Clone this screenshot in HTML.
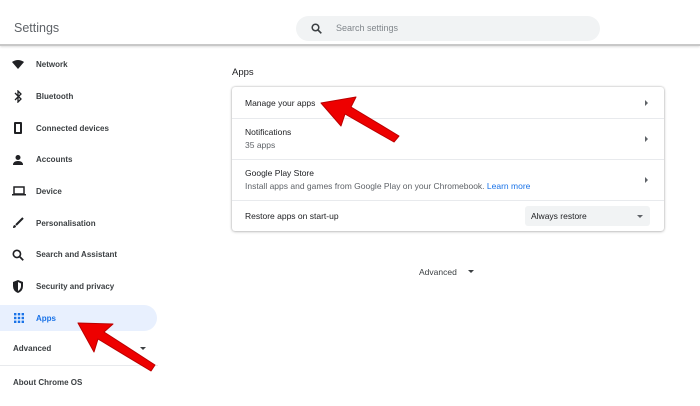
<!DOCTYPE html>
<html><head><style>
*{margin:0;padding:0;box-sizing:border-box}
body{width:700px;height:406px;overflow:hidden;background:#fff;font-family:"Liberation Sans",sans-serif;position:relative;color:#202124}
.hdr{position:absolute;left:0;top:0;width:700px;height:46px;border-bottom:2px solid #c8c8c8;box-shadow:0 1px 2px #ddd}
.title{position:absolute;left:14px;top:21px;font-size:12.5px;color:#5f6368}
.search{position:absolute;left:296px;top:16px;width:304px;height:25px;background:#f1f3f4;border-radius:13px}
.search span{position:absolute;left:40px;top:7px;font-size:9px;color:#80868b}
.nav{position:absolute;left:36px;font-size:8px;font-weight:bold;color:#3c4043}
.ic{position:absolute;left:12px}
.hl{position:absolute;left:0;top:305px;width:157px;height:26px;background:#e8f0fe;border-radius:0 13px 13px 0}
.card{position:absolute;left:232px;top:87px;width:432px;height:144px;border-radius:3px;box-shadow:0 0 2px rgba(0,0,0,.3),0 1px 3px rgba(0,0,0,.15)}
.row{position:absolute;left:0;width:432px;border-top:1px solid #e8eaed}
.t{position:absolute;left:13px;font-size:8.5px;color:#202124}
.s{position:absolute;left:13px;font-size:8.5px;color:#5f6368}
.ar{position:absolute;right:16px;width:0;height:0;border-left:3px solid #5f6368;border-top:3px solid transparent;border-bottom:3px solid transparent}
</style></head><body>
<div class="hdr"><div class="title">Settings</div>
<div class="search"><svg style="position:absolute;left:15px;top:7px" width="11" height="11" viewBox="0 0 11 11"><circle cx="4.5" cy="4.5" r="3.3" fill="none" stroke="#3c4043" stroke-width="1.5"/><path d="M7 7l3.3 3.3" stroke="#3c4043" stroke-width="1.6"/></svg><span>Search settings</span></div></div>

<svg class="ic" style="top:60px" width="12" height="9" viewBox="0 0 12 9"><path d="M0 2Q6-2 12 2L6 9z" fill="#202124"/></svg>
<div class="nav" style="top:60px">Network</div>
<svg class="ic" style="top:90px" width="12" height="13" viewBox="0 0 12 13"><path d="M3 3l6 6-3 3V1l3 3-6 6" fill="none" stroke="#202124" stroke-width="1.3"/></svg>
<div class="nav" style="top:92px">Bluetooth</div>
<div class="ic" style="top:122px;left:14px;width:8px;height:12px;border:2px solid #202124;border-radius:1px"></div>
<div class="nav" style="top:124px">Connected devices</div>
<svg class="ic" style="top:155px" width="12" height="10" viewBox="0 0 12 10"><circle cx="6" cy="2.5" r="2.5" fill="#202124"/><path d="M1 10Q1 6 6 6T11 10z" fill="#202124"/></svg>
<div class="nav" style="top:155px">Accounts</div>
<svg class="ic" style="top:186px" width="14" height="10" viewBox="0 0 14 10"><rect x="2" y="1" width="10" height="7" fill="none" stroke="#202124" stroke-width="1.5"/><rect x="0" y="8" width="14" height="1.5" fill="#202124"/></svg>
<div class="nav" style="top:187px">Device</div>
<svg class="ic" style="top:217px" width="12" height="12" viewBox="0 0 12 12"><path d="M11 1L4 8" stroke="#202124" stroke-width="2"/><path d="M1 11Q1 8 3 8L4 9Q4 11 1 11z" fill="#202124"/></svg>
<div class="nav" style="top:219px">Personalisation</div>
<svg class="ic" style="top:249px" width="12" height="12" viewBox="0 0 11 11"><circle cx="4.5" cy="4.5" r="3.3" fill="none" stroke="#202124" stroke-width="1.5"/><path d="M7 7l3.3 3.3" stroke="#202124" stroke-width="1.6"/></svg>
<div class="nav" style="top:250px">Search and Assistant</div>
<svg class="ic" style="top:280px" width="12" height="13" viewBox="0 0 12 13"><path d="M6 0L11 2V6Q11 11 6 13Q1 11 1 6V2z" fill="#202124"/><path d="M6 2V11Q9 9 9 6V3.5z" fill="#fff"/></svg>
<div class="nav" style="top:282px">Security and privacy</div>
<div class="hl"></div>
<svg class="ic" style="top:313px;left:14px" width="10" height="10" viewBox="0 0 10 10" fill="#1a73e8"><rect x="0" y="0" width="2.4" height="2.4"/><rect x="3.8" y="0" width="2.4" height="2.4"/><rect x="7.6" y="0" width="2.4" height="2.4"/><rect x="0" y="3.8" width="2.4" height="2.4"/><rect x="3.8" y="3.8" width="2.4" height="2.4"/><rect x="7.6" y="3.8" width="2.4" height="2.4"/><rect x="0" y="7.6" width="2.4" height="2.4"/><rect x="3.8" y="7.6" width="2.4" height="2.4"/><rect x="7.6" y="7.6" width="2.4" height="2.4"/></svg>
<div class="nav" style="top:314px;color:#1a73e8">Apps</div>
<div class="nav" style="top:344px;left:13px">Advanced</div>
<div style="position:absolute;left:140px;top:347px;border-left:3px solid transparent;border-right:3px solid transparent;border-top:3px solid #3c4043"></div>
<div style="position:absolute;left:0;top:365px;width:158px;border-top:1px solid #e8eaed"></div>
<div class="nav" style="top:378px;left:13px">About Chrome OS</div>

<div style="position:absolute;left:232px;top:67px;font-size:9.5px;color:#202124">Apps</div>
<div class="card">
<div class="t" style="top:11px">Manage your apps</div><div class="ar" style="top:13px"></div>
<div class="row" style="top:31px;height:41px"><div class="t" style="top:8px">Notifications</div><div class="s" style="top:21px">35 apps</div><div class="ar" style="top:17px"></div></div>
<div class="row" style="top:72px;height:41px"><div class="t" style="top:8px">Google Play Store</div><div class="s" style="top:21px">Install apps and games from Google Play on your Chromebook. <span style="color:#1a73e8">Learn more</span></div><div class="ar" style="top:17px"></div></div>
<div class="row" style="top:113px;height:31px"><div class="t" style="top:10px">Restore apps on start-up</div>
<div style="position:absolute;left:293px;top:5px;width:125px;height:20px;background:#f1f3f4;border-radius:3px"><span style="position:absolute;left:6px;top:5px;font-size:8.5px">Always restore</span><div style="position:absolute;right:7px;top:9px;border-left:3.5px solid transparent;border-right:3.5px solid transparent;border-top:3.5px solid #5f6368"></div></div></div>
</div>
<div style="position:absolute;left:419px;top:267px;font-size:8.5px;color:#3c4043">Advanced</div>
<div style="position:absolute;left:468px;top:270px;border-left:3px solid transparent;border-right:3px solid transparent;border-top:3px solid #3c4043"></div>

<svg style="position:absolute;left:0;top:0" width="700" height="406">
<path d="M321 103L356 97L351 107L399 136L394 142L345 114L341 126Z" fill="#e00" stroke="#b00" stroke-width="1" stroke-linejoin="round"/>
<path d="M78 323L113 324L104 332L155 365L151 371L98 339L94 352Z" fill="#e00" stroke="#b00" stroke-width="1" stroke-linejoin="round"/>
</svg>
</body></html>
